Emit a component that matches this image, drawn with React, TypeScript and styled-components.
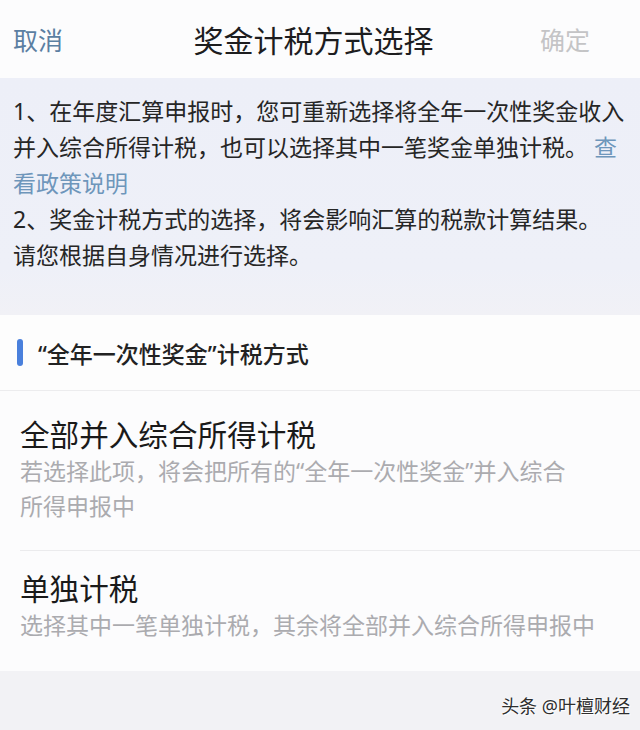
import React from "react";
import styled, { createGlobalStyle } from "styled-components";

const GlobalStyle = createGlobalStyle`
  html, body {
    margin: 0;
    padding: 0;
    background: #f2f2f5;
  }
  body {
    font-family: "Noto Sans", "Noto Sans CJK SC", sans-serif;
  }
`;

const Page = styled.div`
  width: 640px;
  height: 730px;
  display: flex;
  flex-direction: column;
  background: #f2f2f5;
  overflow: hidden;
`;

const NavBar = styled.div`
  height: 78px;
  flex-shrink: 0;
  display: flex;
  align-items: center;
  justify-content: space-between;
  padding: 0 48px 0 13px;
  background: #fcfcfd;
  box-sizing: border-box;
`;

const NavButton = styled.div<{ $disabled?: boolean }>`
  font-size: 25px;
  color: ${(p) => (p.$disabled ? "#c4c4c6" : "#5b7fa2")};
  width: 52px;
`;

const NavTitle = styled.div`
  font-size: 30px;
  color: #1d1d1f;
  margin-left: 22px;
`;

const Notice = styled.div`
  flex-shrink: 0;
  background: linear-gradient(#edeff8 0%, #eef0f8 80%, #f1f1f6 100%);
  padding: 15px 13px 42px;
  font-size: 23px;
  line-height: 36px;
  color: #262626;
  white-space: nowrap;
`;

const Link = styled.span`
  color: #6e96bb;
`;

const SectionHeader = styled.div`
  height: 75px;
  flex-shrink: 0;
  display: flex;
  align-items: center;
  gap: 15px;
  padding-left: 17px;
  background: #fdfdfd;
  border-bottom: 1px solid #ececee;
`;

const Bar = styled.div`
  width: 6px;
  height: 27px;
  border-radius: 3px;
  background: #4a80dc;
`;

const SectionTitle = styled.div`
  font-size: 23px;
  font-weight: 500;
  color: #222;
`;

const Option = styled.div<{ $top: number; $bottom: number; $last?: boolean }>`
  flex-shrink: 0;
  background: #fcfcfd;
  padding: ${(p) => p.$top}px 20px ${(p) => p.$bottom}px;
  position: relative;
  &::after {
    content: "";
    display: ${(p) => (p.$last ? "none" : "block")};
    position: absolute;
    left: 20px;
    right: 0;
    bottom: 0;
    height: 1px;
    background: #ebebed;
  }
`;

const OptionTitle = styled.div`
  font-size: 29.6px;
  line-height: 38px;
  color: #1a1a1a;
`;

const OptionDesc = styled.div`
  font-size: 23px;
  line-height: 35px;
  color: #ababaf;
  white-space: nowrap;
`;

const Footer = styled.div`
  flex: 1;
  display: flex;
  justify-content: flex-end;
  align-items: flex-end;
  padding: 0 10px 12px 0;
`;

const Watermark = styled.div`
  font-size: 18px;
  color: #2e2e2e;
  text-shadow: 0 0 2px #fff, 0 0 2px #fff, 1px 1px 1px #fff;
`;

export default function App() {
  return (
    <Page>
      <GlobalStyle />
      <NavBar>
        <NavButton>取消</NavButton>
        <NavTitle>奖金计税方式选择</NavTitle>
        <NavButton $disabled>确定</NavButton>
      </NavBar>
      <Notice>
        1、在年度汇算申报时，您可重新选择将全年一次性奖金收入
        <br />
        并入综合所得计税，也可以选择其中一笔奖金单独计税。 <Link>查</Link>
        <br />
        <Link>看政策说明</Link>
        <br />
        2、奖金计税方式的选择，将会影响汇算的税款计算结果。
        <br />
        请您根据自身情况进行选择。
      </Notice>
      <SectionHeader>
        <Bar />
        <SectionTitle>“全年一次性奖金”计税方式</SectionTitle>
      </SectionHeader>
      <Option $top={25} $bottom={27}>
        <OptionTitle>全部并入综合所得计税</OptionTitle>
        <OptionDesc>
          若选择此项，将会把所有的“全年一次性奖金”并入综合
          <br />
          所得申报中
        </OptionDesc>
      </Option>
      <Option $top={19} $bottom={28} $last>
        <OptionTitle>单独计税</OptionTitle>
        <OptionDesc>选择其中一笔单独计税，其余将全部并入综合所得申报中</OptionDesc>
      </Option>
      <Footer>
        <Watermark>头条 @叶檀财经</Watermark>
      </Footer>
    </Page>
  );
}
